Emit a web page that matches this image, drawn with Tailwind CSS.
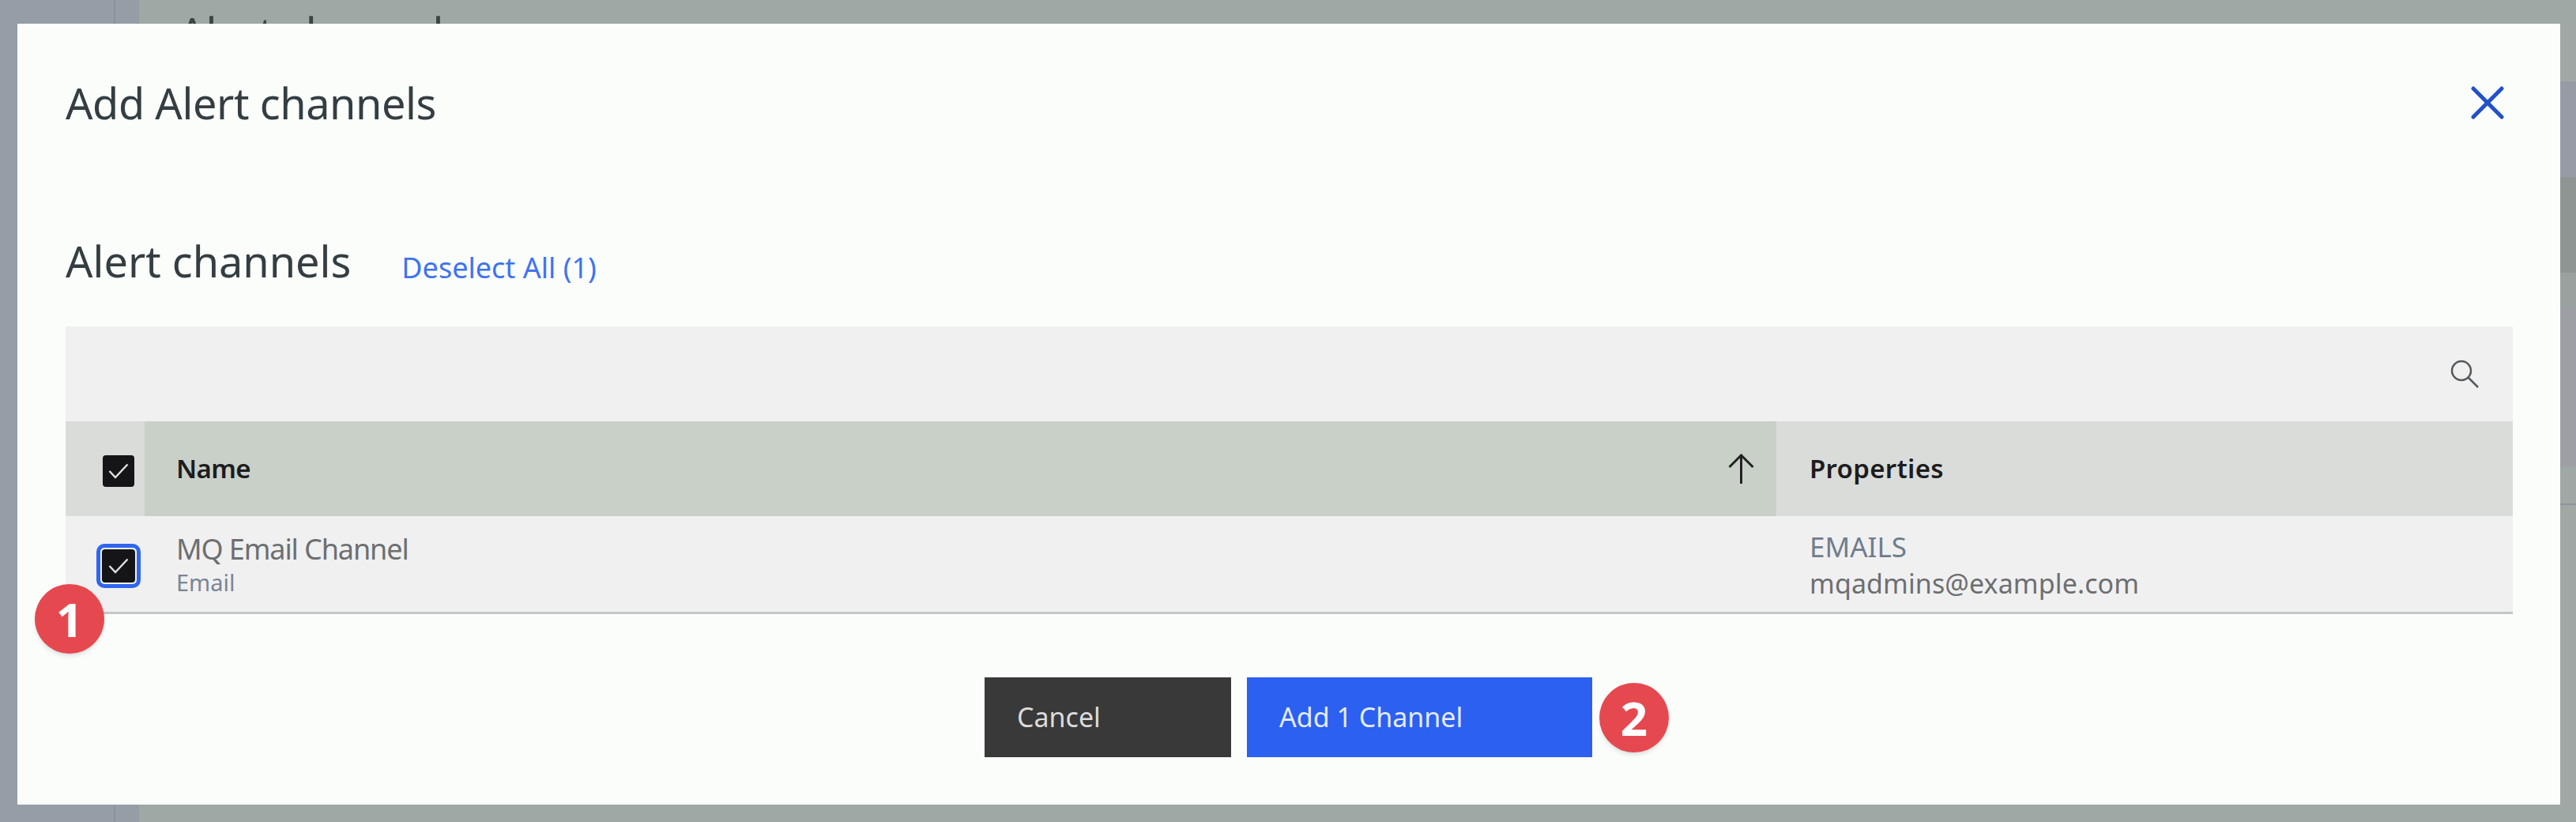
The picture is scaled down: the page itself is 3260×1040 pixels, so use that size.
<!DOCTYPE html>
<html>
<head>
<meta charset="utf-8">
<script src="https://cdn.jsdelivr.net/npm/@tailwindcss/browser@4"></script>
<title>Add Alert channels</title>
</head>
<body class="m-0 w-[3260px] h-[1040px] overflow-hidden bg-[#a0a8a6] font-['Noto_Sans',sans-serif]">
<div class="relative w-[3260px] h-[1040px] pl-[22px] pr-[20px] pt-[30px] pb-[22px] blur-[0.6px]">
  <div class="absolute left-0 top-0 w-[176px] h-[1040px] bg-[#979da6]"></div>
  <div class="absolute left-[144px] top-0 w-[2px] h-[1040px] bg-[#8c929b]"></div>
  <div class="absolute left-[226px] top-0 h-[30px] overflow-hidden pt-[9px] text-[54px] leading-[64px] text-[#3a4442]">Alert channels</div>
  <div class="absolute right-0 top-[103px] w-[40px] flex flex-col">
    <div class="h-[121px] bg-[#969ca6]"></div>
    <div class="h-[121px] bg-[#8f9593]"></div>
    <div class="h-[43px] bg-[#9aa2a0]"></div>
    <div class="h-[202px] bg-[#9e9fa5]"></div>
    <div class="h-[47px]"></div>
    <div class="h-[2px] bg-[#8f949a]"></div>
  </div>
  <main class="relative h-[988px] w-[3218px] bg-[#fbfdfb] pl-[61px] pr-[60px] flex flex-col">
    <header class="h-[200px] flex items-center justify-between shrink-0">
      <h1 class="text-[54px] font-normal tracking-[-0.4px] text-[#343e42]">Add Alert channels</h1>
      <svg class="w-[42px] h-[42px] mr-[11px]" viewBox="0 0 42 42" fill="none" stroke="#2250c8" stroke-width="5" stroke-linecap="round"><path d="M3 3 L39 39 M39 3 L3 39"/></svg>
    </header>
    <div class="h-[183px] flex items-center shrink-0 pt-[18px] gap-[64px]">
      <h2 class="text-[54px] font-normal tracking-[0px] text-[#343e42]">Alert channels</h2>
      <a class="text-[36px] text-[#3f73f0] mt-[16px]">Deselect All (1)</a>
    </div>
    <section class="flex flex-col">
      <div class="h-[120px] bg-[#f0f0f1] flex items-center justify-end pr-[43px]">
        <svg class="w-[36px] h-[36px]" viewBox="0 0 36 36" fill="none" stroke="#55595c" stroke-width="2.5"><circle cx="14" cy="14" r="12"/><path d="M23 23 L35 35"/></svg>
      </div>
      <div class="h-[120px] flex bg-[#dadcd9] font-semibold text-[33px] text-[#1c1c1e]">
        <div class="w-[100px] flex items-center pl-[47px]">
          <div class="w-[40px] h-[40px] mt-[5px] rounded-[4px] bg-[#151416] flex items-center justify-center">
            <svg class="w-[26px] h-[20px]" viewBox="0 0 26 20" fill="none" stroke="#dfdfdf" stroke-width="2.5"><path d="M1.5 10 L9 18 L24.5 1.5"/></svg>
          </div>
        </div>
        <div class="w-[2065px] bg-[#c9d0c8] flex items-center justify-between pl-[40px] pr-[28px]">
          <span class="tracking-[-0.6px]">Name</span>
          <svg class="w-[33px] h-[38px]" viewBox="0 0 33 38" fill="none" stroke="#222" stroke-width="3"><path d="M16.5 38 V2 M1.5 17 L16.5 2 L31.5 17"/></svg>
        </div>
        <div class="flex-1 flex items-center pl-[42px] tracking-[0.3px]">Properties</div>
      </div>
      <div class="h-[124px] flex bg-[#f0f0f1] border-b-[3px] border-[#c3c8c4]">
        <div class="w-[100px] flex items-center pl-[39px]">
          <div class="w-[56px] h-[56px] mt-[5px] rounded-[10px] border-[5px] border-[#2f66f0] p-[2px]">
            <div class="w-full h-full rounded-[4px] bg-[#151416] flex items-center justify-center">
              <svg class="w-[26px] h-[20px]" viewBox="0 0 26 20" fill="none" stroke="#dfdfdf" stroke-width="2.5"><path d="M1.5 10 L9 18 L24.5 1.5"/></svg>
            </div>
          </div>
        </div>
        <div class="w-[2065px] flex flex-col justify-center pl-[40px]">
          <span class="text-[36px] leading-[46px] tracking-[-1.1px] text-[#6c6f70]">MQ Email Channel</span>
          <span class="text-[29px] leading-[38px] text-[#7a8594]">Email</span>
        </div>
        <div class="flex-1 flex flex-col justify-center pl-[42px] pt-[3px]">
          <span class="text-[35px] leading-[47px] text-[#6f7d8c]">EMAILS</span>
          <span class="text-[34px] leading-[47px] tracking-[0.1px] text-[#6c6f70]">mqadmins@example.com</span>
        </div>
      </div>
    </section>
    <footer class="mt-[80px] flex justify-center gap-[20px] pr-[2px]">
      <button class="w-[312px] h-[101px] bg-[#393939] text-[#dcdcdc] text-[34px] text-left pl-[41px]">Cancel</button>
      <button class="w-[437px] h-[101px] bg-[#2b60f0] text-[#e4ebfd] text-[34px] text-left pl-[41px]">Add 1 Channel</button>
    </footer>
    <div class="absolute left-[22px] top-[709px] w-[88px] h-[88px] rounded-full bg-[#e5494f] text-white text-[60px] font-bold flex items-center justify-center shadow-md">1</div>
    <div class="absolute left-[2002px] top-[834px] w-[88px] h-[88px] rounded-full bg-[#e5494f] text-white text-[60px] font-bold flex items-center justify-center shadow-md">2</div>
  </main>
</div>
</body>
</html>
